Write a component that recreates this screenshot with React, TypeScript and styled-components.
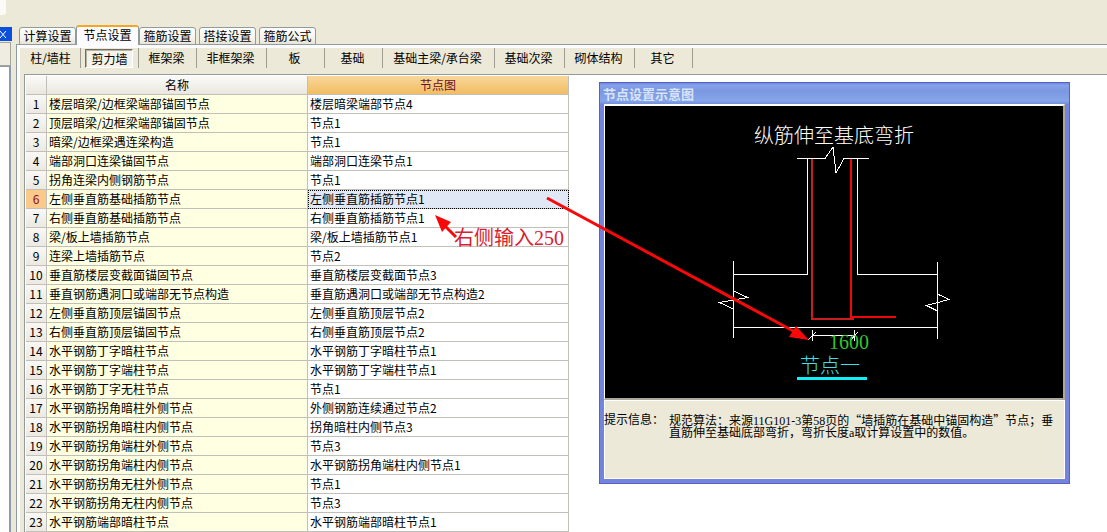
import React from "react";
import styled, { createGlobalStyle, css } from "styled-components";

const GlobalStyle = createGlobalStyle`
  * { box-sizing: border-box; }
  body {
    margin: 0;
    background: #ece9d8;
    color: #000;
    font: 12px/18px "Noto Sans CJK SC", "Liberation Sans", sans-serif;
    text-spacing-trim: space-all;
  }
  button { font: inherit; color: inherit; padding: 0; border: 0; background: none; }
`;

const Page = styled.div`
  display: flex;
  min-height: 100vh;
  overflow: hidden;
`;

const Dock = styled.aside`
  display: flex;
  flex-direction: column;
  flex: 0 0 12px;
`;

const DockCorner = styled.div`
  width: 6px;
  height: 15px;
  margin-bottom: 12px;
  background: #fbfaf7;
  border-radius: 0 0 3px 0;
`;

const CloseButton = styled.button`
  display: block;
  width: 12px;
  height: 14px;
  background: #0a50dc;
  svg { display: block; }
`;

const DockBar = styled.div`
  height: 24px;
  width: 11px;
  margin-top: 1px;
  border: solid #a5a59a;
  border-width: 1px 1px 1px 0;
  background: #efede2;
`;

const DockBody = styled.div`
  flex: 1;
  width: 11px;
  background: #fff;
  border-right: 2px solid #8d9ab0;
  border-top: 1px solid #8d9ab0;
`;

const Main = styled.main`
  flex: 1;
  min-width: 0;
  display: flex;
  flex-direction: column;
  padding: 25px 0 0 4px;
`;

const TabBar = styled.div`
  display: flex;
  align-items: flex-end;
  gap: 3px;
  height: 20px;
  padding-left: 3px;
  z-index: 1;
`;

const Tab = styled.button<{ $active?: boolean }>`
  width: 57px;
  height: 18px;
  line-height: 16px;
  border: 1px solid #919b9c;
  border-radius: 3px 3px 0 0;
  background: linear-gradient(#fff, #f3f2ea 70%, #e6e3d6);
  white-space: nowrap;
  ${(p) =>
    p.$active &&
    css`
      width: 63px;
      height: 20px;
      margin: 0 -3px;
      border-top: 2px solid #f5a623;
      border-bottom: 0;
      padding-bottom: 2px;
      background: #fcfcfe;
    `}
`;

const Pane = styled.section`
  flex: 1;
  display: flex;
  flex-direction: column;
  margin-top: -1px;
  border: solid #919b9c;
  border-width: 1px 0 0 1px;
  background: #ece9d8;
  box-shadow: inset 3px 3px 0 #fcfcfe;
  padding: 3px 0 0 7px;
`;

const ToolBar = styled.nav`
  display: flex;
  height: 26px;
  margin-left: -1px;
`;

const ToolItem = styled.div<{ $wide: number }>`
  width: ${(p) => p.$wide}px;
  height: 20px;
  display: flex;
  justify-content: center;
  padding-right: 2px;
  border-right: 1px solid #9f9d92;
`;

const ToolButton = styled.button<{ $pressed?: boolean }>`
  height: 20px;
  line-height: 20px;
  white-space: nowrap;
  ${(p) =>
    p.$pressed &&
    css`
      width: 48px;
      height: 19px;
      margin-top: 1px;
      padding-left: 2px;
      border: 1px solid;
      border-color: #6f6d62 #fff #fff #6f6d62;
      background: #f4f2ea;
      box-shadow: inset 1px 1px 0 #b5b2a3;
      line-height: 18px;
    `}
`;

const Workspace = styled.div`
  flex: 1;
  display: flex;
  align-items: flex-start;
  position: relative;
  border: solid #919b9c;
  border-width: 1px 0 0 1px;
  background: #fff;
  padding: 1px 0 0 1px;
`;

const Grid = styled.table`
  flex: none;
  width: 543px;
  table-layout: fixed;
  border-spacing: 0;
  th, td {
    height: 19px;
    padding: 0 2px;
    line-height: 18px;
    font-weight: 400;
    text-align: left;
    white-space: nowrap;
    border: solid #c0c0b8;
    border-width: 0 1px 1px 0;
  }
`;

const HeadCell = styled.th<{ $hot?: boolean }>`
  && { text-align: center; }
  background: ${(p) => (p.$hot ? "linear-gradient(#f8d79b, #f2bd62)" : "linear-gradient(#fbfaf8, #e9e7de)")};
  color: ${(p) => (p.$hot ? "#6a0f2c" : "#000")};
`;

const NumberCell = styled.th<{ $hot?: boolean }>`
  && { text-align: center; padding: 0; }
  background: ${(p) => (p.$hot ? "#fbc98a" : "linear-gradient(#f9f8f5, #ebe9e1)")};
  color: ${(p) => (p.$hot ? "#8a1020" : "#000")};
`;

const NameCell = styled.td`
  background: #ffffe1;
`;

const NodeCell = styled.td<{ $hot?: boolean }>`
  ${(p) =>
    p.$hot &&
    css`
      background: #e1e8f5;
      outline: 1px dotted #000;
      outline-offset: -1px;
    `}
`;

const Canvas = styled.div`
  flex: 1;
  min-width: 0;
  padding: 6px 30px 0 30px;
`;

const Dialog = styled.section`
  max-width: 471px;
  border: solid #7484dc;
  border-width: 0 5px 5px 5px;
  box-shadow: inset 0 0 0 1px #fff;
  outline: 1px solid #5a5fc4;
  outline-offset: -1px;
  background: #ece9d8;
`;

const DialogTitle = styled.h2`
  margin: 0 -5px;
  height: 22px;
  padding: 2px 4px 0;
  font-size: 13px;
  line-height: 20px;
  font-weight: 700;
  color: #d8e4f8;
  background: linear-gradient(#5f78d4, #86a2ea 14%, #7a97e0 40%, #85a5ea 85%, #7590dc);
`;

const Drawing = styled.div`
  border: solid;
  border-width: 2px 2px 2px 1px;
  border-color: #fff #aca899 #aca899 #fff;
  background: #000;
  svg { display: block; width: 100%; height: 292px; }
`;

const Hint = styled.dl`
  display: flex;
  margin: 0;
  height: 79px;
  padding: 13px 0 0;
  line-height: 12px;
  border-top: 1px solid #fff;
  font-family: "Liberation Serif", "Noto Sans CJK SC", serif;
  dt { flex: 0 0 65px; white-space: nowrap; }
  dd { margin: 0; white-space: nowrap; }
`;

const Quoted = styled.span`
  font-family: "Noto Sans CJK SC", sans-serif;
`;

const Annotations = styled.svg`
  position: absolute;
  left: 0;
  top: 0;
  pointer-events: none;
`;

const tabs = ["计算设置", "节点设置", "箍筋设置", "搭接设置", "箍筋公式"];

const tools: [string, number][] = [
  ["柱/墙柱", 58],
  ["剪力墙", 58],
  ["框架梁", 58],
  ["非框架梁", 70],
  ["板", 58],
  ["基础", 58],
  ["基础主梁/承台梁", 112],
  ["基础次梁", 70],
  ["砌体结构", 70],
  ["其它", 58],
];

const rows: [string, string][] = [
  ["楼层暗梁/边框梁端部锚固节点", "楼层暗梁端部节点4"],
  ["顶层暗梁/边框梁端部锚固节点", "节点1"],
  ["暗梁/边框梁遇连梁构造", "节点1"],
  ["端部洞口连梁锚固节点", "端部洞口连梁节点1"],
  ["拐角连梁内侧钢筋节点", "节点1"],
  ["左侧垂直筋基础插筋节点", "左侧垂直筋插筋节点1"],
  ["右侧垂直筋基础插筋节点", "右侧垂直筋插筋节点1"],
  ["梁/板上墙插筋节点", "梁/板上墙插筋节点1"],
  ["连梁上墙插筋节点", "节点2"],
  ["垂直筋楼层变截面锚固节点", "垂直筋楼层变截面节点3"],
  ["垂直钢筋遇洞口或端部无节点构造", "垂直筋遇洞口或端部无节点构造2"],
  ["左侧垂直筋顶层锚固节点", "左侧垂直筋顶层节点2"],
  ["右侧垂直筋顶层锚固节点", "右侧垂直筋顶层节点2"],
  ["水平钢筋丁字暗柱节点", "水平钢筋丁字暗柱节点1"],
  ["水平钢筋丁字端柱节点", "水平钢筋丁字端柱节点1"],
  ["水平钢筋丁字无柱节点", "节点1"],
  ["水平钢筋拐角暗柱外侧节点", "外侧钢筋连续通过节点2"],
  ["水平钢筋拐角暗柱内侧节点", "拐角暗柱内侧节点3"],
  ["水平钢筋拐角端柱外侧节点", "节点3"],
  ["水平钢筋拐角端柱内侧节点", "水平钢筋拐角端柱内侧节点1"],
  ["水平钢筋拐角无柱外侧节点", "节点1"],
  ["水平钢筋拐角无柱内侧节点", "节点3"],
  ["水平钢筋端部暗柱节点", "水平钢筋端部暗柱节点1"],
];

const selectedRow = 5;
const cadFont = '"Liberation Serif", "Noto Sans CJK SC", serif';

function NodeDrawing() {
  return (
    <svg viewBox="0 0 458 292" preserveAspectRatio="xMinYMin meet" fontFamily={cadFont} fontSize="20" fontWeight="300">
      <text x="149" y="37" fill="#fff">纵筋伸至基底弯折</text>
      <g fill="none" stroke="#fff" strokeWidth="1" shapeRendering="crispEdges">
        <path d="M192 52.5H220L228 41L231 67L239 52.5H264" />
        <path d="M202.500 52V168.500H128.500" />
        <path d="M252.500 52V168.500H333" />
        <path d="M128.500 155V232M332.500 156V233M128.500 221.500H333" />
        <path d="M128.500 185L142.500 191.500L114.500 196.500L128.500 203" />
        <path d="M332.500 188L344 193.500L321.500 199.500L332.500 205" />
        <path d="M207 229.500H250M207.500 224V235M249.500 224V235M203 234L211 226M246 234L253 226" />
      </g>
      <g fill="none" stroke="#e01010" strokeWidth="2">
        <path d="M207 53V213H249" stroke="#c81c20" />
        <path d="M246 53V211H291" stroke="#f00808" />
      </g>
      <text x="224" y="243" fill="#2fc42f">1600</text>
      <text x="195" y="267" fill="#40e0e8">节点一</text>
      <path d="M192 272.500H262" stroke="#10f0f8" strokeWidth="3" />
    </svg>
  );
}

export default function App() {
  return (
    <>
      <GlobalStyle />
      <Page lang="zh-CN">
        <Dock>
          <DockCorner />
          <CloseButton aria-label="关闭">
            <svg width="12" height="14" viewBox="0 0 12 14">
              <path d="M0 4L6 11M6 4L0 11" stroke="#fff" fill="none" />
            </svg>
          </CloseButton>
          <DockBar />
          <DockBody />
        </Dock>
        <Main>
          <TabBar role="tablist">
            {tabs.map((t, i) => (
              <Tab key={t} role="tab" aria-selected={i === 1} $active={i === 1}>{t}</Tab>
            ))}
          </TabBar>
          <Pane>
            <ToolBar>
              {tools.map(([label, wide], i) => (
                <ToolItem key={label} $wide={wide}>
                  <ToolButton aria-pressed={i === 1} $pressed={i === 1}>{label}</ToolButton>
                </ToolItem>
              ))}
            </ToolBar>
            <Workspace>
              <Grid>
                <colgroup>
                  <col width="21" />
                  <col width="261" />
                  <col width="261" />
                </colgroup>
                <thead>
                  <tr>
                    <HeadCell />
                    <HeadCell scope="col">名称</HeadCell>
                    <HeadCell scope="col" $hot>节点图</HeadCell>
                  </tr>
                </thead>
                <tbody>
                  {rows.map(([name, node], i) => (
                    <tr key={name}>
                      <NumberCell scope="row" $hot={i === selectedRow}>{i + 1}</NumberCell>
                      <NameCell>{name}</NameCell>
                      <NodeCell $hot={i === selectedRow}>{node}</NodeCell>
                    </tr>
                  ))}
                </tbody>
              </Grid>
              <Canvas>
                <Dialog>
                  <DialogTitle>节点设置示意图</DialogTitle>
                  <Drawing><NodeDrawing /></Drawing>
                  <Hint>
                    <dt>提示信息：</dt>
                    <dd>
                      规范算法：来源11G101-3第58页的<Quoted>“墙插筋在基础中锚固构造”</Quoted>节点；垂<br />
                      直筋伸至基础底部弯折，弯折长度a取计算设置中的数值。
                    </dd>
                  </Hint>
                </Dialog>
              </Canvas>
              <Annotations width="800" height="290" viewBox="0 0 800 290">
                <g stroke="#f80808" strokeWidth="3">
                  <path d="M522 123L770 257" />
                  <path d="M431 162L418 149" />
                </g>
                <path d="M784 265L764 262L771 251Z" fill="#f80808" />
                <path d="M410 140L426 147L417 157Z" fill="#f80808" />
                <text x="429" y="170" fontFamily={cadFont} fontSize="20" fill="#d82030">右侧输入250</text>
              </Annotations>
            </Workspace>
          </Pane>
        </Main>
      </Page>
    </>
  );
}
